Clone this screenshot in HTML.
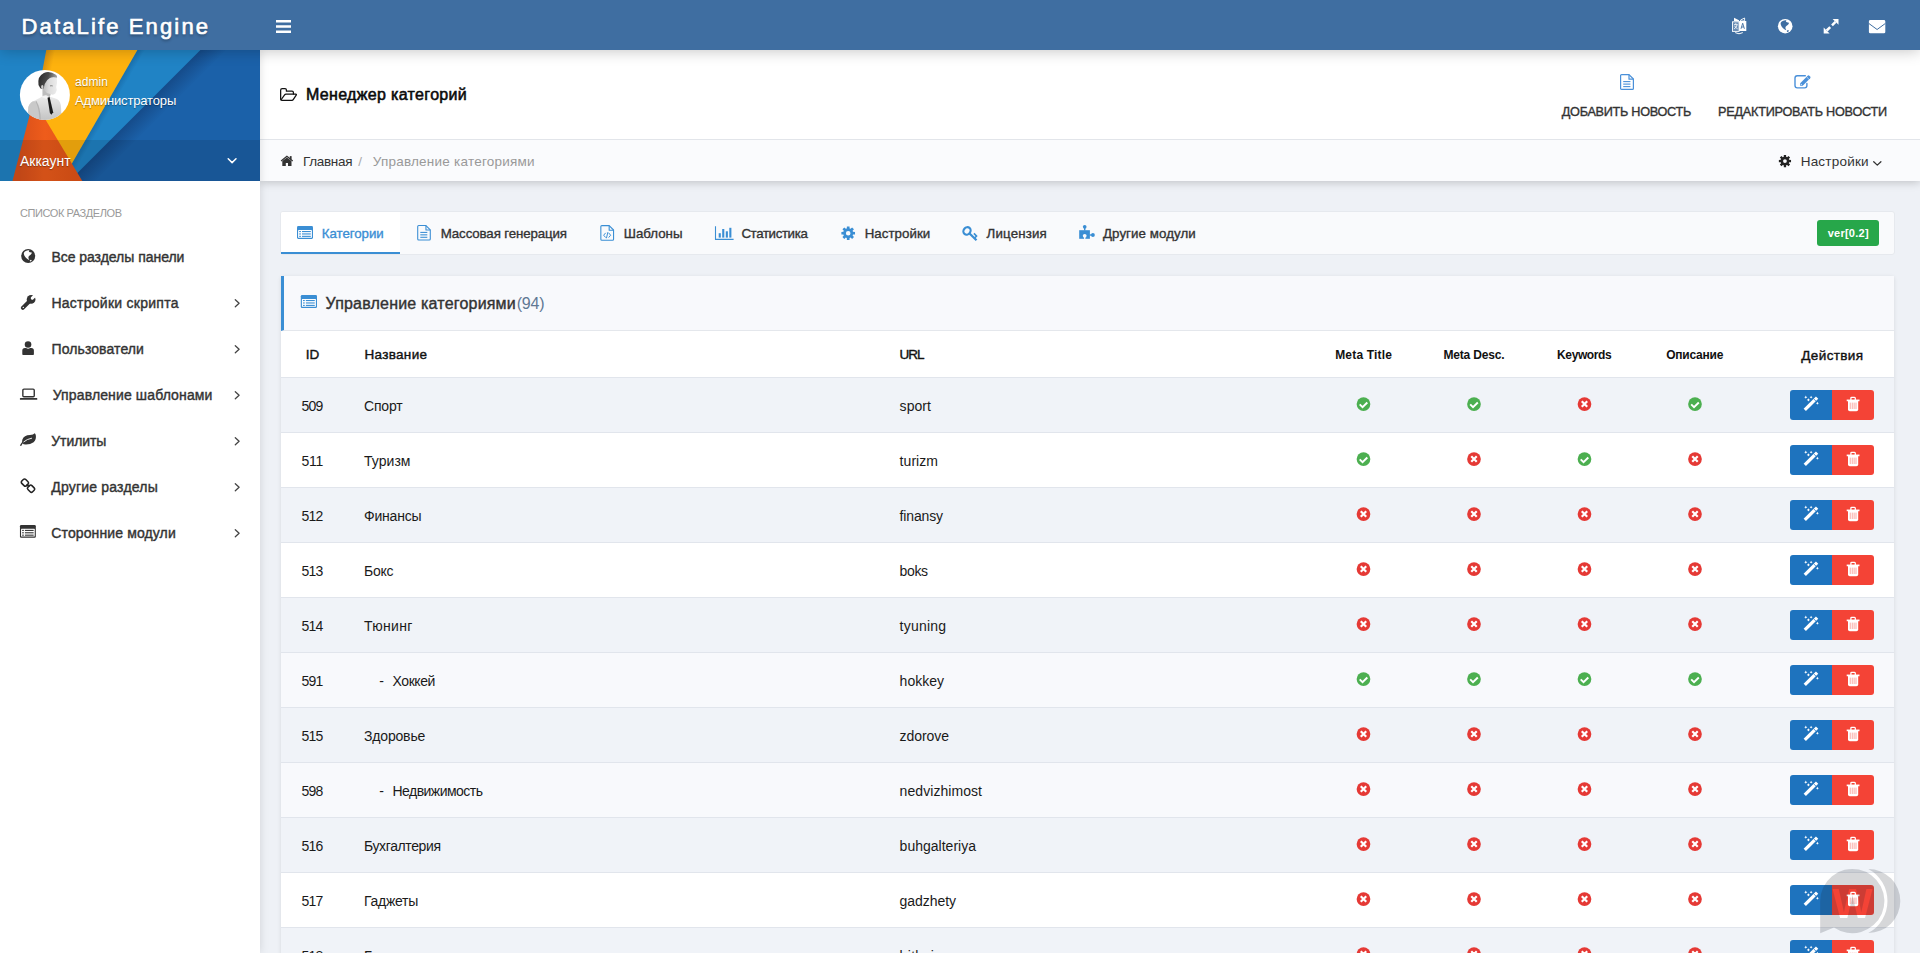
<!DOCTYPE html>
<html lang="ru"><head><meta charset="utf-8"><title>DataLife Engine</title>
<style>
html,body{margin:0;padding:0}
body{width:1920px;height:953px;overflow:hidden;background:#eef1f6;position:relative;font-family:"Liberation Sans",sans-serif;}
.t{position:absolute;white-space:nowrap;line-height:1;display:block}
.i{position:absolute;display:block;overflow:visible}
.b{position:absolute;box-sizing:border-box}
</style></head><body>
<div class="b" style="left:280px;top:211px;width:1615px;height:44px;background:#f9fafc;border:1px solid #e6e9ee;border-radius:3px;"></div>
<div class="b" style="left:281px;top:212px;width:119px;height:40px;background:#fff;border-radius:2px 0 0 0;"></div>
<div class="b" style="left:281px;top:252px;width:119px;height:2px;background:#3a8ed4;"></div>
<span class="t" style="left:321.75px;top:227.04px;font-size:13.3px;color:#3a8ed4;letter-spacing:-0.050px;-webkit-text-stroke:0.35px #3a8ed4;">Категории</span>
<span class="t" style="left:440.75px;top:227.04px;font-size:13.3px;color:#333;letter-spacing:-0.128px;-webkit-text-stroke:0.35px #333;">Массовая генерация</span>
<span class="t" style="left:623.75px;top:227.04px;font-size:13.3px;color:#333;letter-spacing:-0.011px;-webkit-text-stroke:0.35px #333;">Шаблоны</span>
<span class="t" style="left:741.40px;top:227.04px;font-size:13.3px;color:#333;letter-spacing:-0.383px;-webkit-text-stroke:0.35px #333;">Статистика</span>
<span class="t" style="left:864.70px;top:227.04px;font-size:13.3px;color:#333;letter-spacing:0.036px;-webkit-text-stroke:0.35px #333;">Настройки</span>
<span class="t" style="left:986.60px;top:227.04px;font-size:13.3px;color:#333;letter-spacing:0.143px;-webkit-text-stroke:0.35px #333;">Лицензия</span>
<span class="t" style="left:1103.00px;top:227.04px;font-size:13.3px;color:#333;letter-spacing:0.072px;-webkit-text-stroke:0.35px #333;">Другие модули</span>
<div class="b" style="left:1817px;top:220px;width:62px;height:26px;background:#27a74a;border-radius:3px;"></div>
<span class="t" style="left:1827.70px;top:227.69px;font-size:11px;color:#fff;letter-spacing:0.252px;font-weight:700;">ver[0.2]</span>
<div class="b" style="left:281px;top:276px;width:1613px;height:700px;background:#fff;box-shadow:0 1px 4px rgba(0,0,0,.10);"></div>
<div class="b" style="left:281px;top:276px;width:1613px;height:55px;background:#f8f9fc;border-left:3px solid #3a8ed4;border-bottom:1px solid #e4e7ec;"></div>
<span class="t" style="left:325.50px;top:295.76px;font-size:16px;color:#333;letter-spacing:0.195px;-webkit-text-stroke:0.4px #333;">Управление категориями</span>
<span class="t" style="left:516.75px;top:295.76px;font-size:16px;color:#5f7894;letter-spacing:-0.234px;">(94)</span>
<div class="b" style="left:281px;top:377px;width:1613px;height:1px;background:#e1e5ec;"></div>
<span class="t" style="left:305.80px;top:348.27px;font-size:13.5px;color:#111;letter-spacing:-0.100px;-webkit-text-stroke:0.4px #111;">ID</span>
<span class="t" style="left:364.50px;top:348.27px;font-size:13.5px;color:#111;letter-spacing:0.310px;-webkit-text-stroke:0.4px #111;">Название</span>
<span class="t" style="left:899.60px;top:348.27px;font-size:13.5px;color:#111;letter-spacing:-1.003px;-webkit-text-stroke:0.4px #111;">URL</span>
<span class="t" style="left:1335.20px;top:348.64px;font-size:12px;color:#111;letter-spacing:0.186px;font-weight:700;">Meta Title</span>
<span class="t" style="left:1443.40px;top:348.64px;font-size:12px;color:#111;letter-spacing:-0.166px;font-weight:700;">Meta Desc.</span>
<span class="t" style="left:1557.10px;top:348.64px;font-size:12px;color:#111;letter-spacing:-0.393px;font-weight:700;">Keywords</span>
<span class="t" style="left:1666.20px;top:348.64px;font-size:12px;color:#111;letter-spacing:-0.222px;font-weight:700;">Описание</span>
<span class="t" style="left:1801.30px;top:348.57px;font-size:13.5px;color:#111;letter-spacing:0.379px;-webkit-text-stroke:0.4px #111;">Действия</span>
<div class="b" style="left:281px;top:378px;width:1613px;height:55px;background:#f0f3f8;border-bottom:1px solid #e1e5ec;"></div>
<span class="t" style="left:301.60px;top:399.35px;font-size:14px;color:#1a1a1a;letter-spacing:-0.779px;">509</span>
<span class="t" style="left:364.00px;top:399.35px;font-size:14px;color:#1a1a1a;letter-spacing:-0.192px;">Спорт</span>
<span class="t" style="left:899.60px;top:399.35px;font-size:14px;color:#1a1a1a;letter-spacing:0.069px;">sport</span>
<svg class="i" style="left:1356px;top:397px;" width="15" height="14" viewBox="-0.6642 -0.2044 15.328 14.307"><circle cx="7" cy="7" r="7" fill="#4caf50"/><path d="M3.1 7.3 L6 10.1 L10.9 5.4" fill="none" stroke="#fff" stroke-width="2" stroke-linecap="butt" stroke-linejoin="miter"/></svg>
<svg class="i" style="left:1467px;top:397px;" width="14" height="14" viewBox="-0.1533 -0.2044 14.307 14.307"><circle cx="7" cy="7" r="7" fill="#4caf50"/><path d="M3.1 7.3 L6 10.1 L10.9 5.4" fill="none" stroke="#fff" stroke-width="2" stroke-linecap="butt" stroke-linejoin="miter"/></svg>
<svg class="i" style="left:1577px;top:397px;" width="15" height="14" viewBox="-0.6642 -0.2044 15.328 14.307"><circle cx="7" cy="7" r="7" fill="#e53935"/><path d="M4.2 4.2 L9.8 9.8 M9.8 4.2 L4.2 9.8" fill="none" stroke="#fff" stroke-width="2.2" stroke-linecap="butt"/></svg>
<svg class="i" style="left:1688px;top:397px;" width="14" height="14" viewBox="-0.1533 -0.2044 14.307 14.307"><circle cx="7" cy="7" r="7" fill="#4caf50"/><path d="M3.1 7.3 L6 10.1 L10.9 5.4" fill="none" stroke="#fff" stroke-width="2" stroke-linecap="butt" stroke-linejoin="miter"/></svg>
<div class="b" style="left:1790px;top:390px;width:42px;height:30px;background:#1e73be;border-radius:3px 0 0 3px;"></div>
<div class="b" style="left:1832px;top:390px;width:42px;height:30px;background:#f44336;border-radius:0 3px 3px 0;"></div>
<svg class="i" style="left:1803px;top:396px;" width="16" height="16" viewBox="-0.5 0 16 16"><path d="M1.3 13.9 L13.6 1.6" stroke="#fff" stroke-width="3.3"/><path d="M10.1 2.8 L12.5 5.2" stroke="#1e73be" stroke-width="0.8"/><g fill="#fff"><path d="M2.3 -0.4l.55 1.05 1.05.55-1.05.55-.55 1.05-.55-1.05-1.05-.55 1.05-.55z"/><path d="M7.6 -0.3l.5 .95 .95.5-.95.5-.5.95-.5-.95-.95-.5.95-.5z"/><path d="M4.9 2.3l.55 1.05 1.05.55-1.05.55-.55 1.05-.55-1.05-1.05-.55 1.05-.55z"/><path d="M13.9 5.8l.5.95.95.5-.95.5-.5.95-.5-.95-.95-.5.95-.5z"/></g></svg>
<svg class="i" style="left:1846px;top:396px;" width="14" height="16" viewBox="-0.5 -0.7 14 16"><g fill="none" stroke="#fff"><path d="M4.4 3.2 V1.5 Q4.4 0.65 5.2 0.65 H8 Q8.8 0.65 8.8 1.5 V3.2" stroke-width="1.3"/><path d="M0.2 3.7 H13" stroke-width="1.7"/></g><path d="M1.5 4 H11.7 V12.7 Q11.7 14.5 9.9 14.5 H3.3 Q1.5 14.5 1.5 12.7Z" fill="#fff"/><g fill="#f44336" fill-opacity=".55"><rect x="3.3" y="5.9" width="0.8" height="6.4"/><rect x="5.3" y="5.9" width="0.8" height="6.4"/><rect x="7.2" y="5.9" width="0.8" height="6.4"/><rect x="9.1" y="5.9" width="0.8" height="6.4"/></g></svg>
<div class="b" style="left:281px;top:433px;width:1613px;height:55px;background:#ffffff;border-bottom:1px solid #e1e5ec;"></div>
<span class="t" style="left:301.60px;top:454.35px;font-size:14px;color:#1a1a1a;letter-spacing:-0.260px;">511</span>
<span class="t" style="left:364.00px;top:454.35px;font-size:14px;color:#1a1a1a;letter-spacing:0.048px;">Туризм</span>
<span class="t" style="left:899.60px;top:454.35px;font-size:14px;color:#1a1a1a;letter-spacing:0.058px;">turizm</span>
<svg class="i" style="left:1356px;top:452px;" width="15" height="14" viewBox="-0.6642 -0.2044 15.328 14.307"><circle cx="7" cy="7" r="7" fill="#4caf50"/><path d="M3.1 7.3 L6 10.1 L10.9 5.4" fill="none" stroke="#fff" stroke-width="2" stroke-linecap="butt" stroke-linejoin="miter"/></svg>
<svg class="i" style="left:1467px;top:452px;" width="14" height="14" viewBox="-0.1533 -0.2044 14.307 14.307"><circle cx="7" cy="7" r="7" fill="#e53935"/><path d="M4.2 4.2 L9.8 9.8 M9.8 4.2 L4.2 9.8" fill="none" stroke="#fff" stroke-width="2.2" stroke-linecap="butt"/></svg>
<svg class="i" style="left:1577px;top:452px;" width="15" height="14" viewBox="-0.6642 -0.2044 15.328 14.307"><circle cx="7" cy="7" r="7" fill="#4caf50"/><path d="M3.1 7.3 L6 10.1 L10.9 5.4" fill="none" stroke="#fff" stroke-width="2" stroke-linecap="butt" stroke-linejoin="miter"/></svg>
<svg class="i" style="left:1688px;top:452px;" width="14" height="14" viewBox="-0.1533 -0.2044 14.307 14.307"><circle cx="7" cy="7" r="7" fill="#e53935"/><path d="M4.2 4.2 L9.8 9.8 M9.8 4.2 L4.2 9.8" fill="none" stroke="#fff" stroke-width="2.2" stroke-linecap="butt"/></svg>
<div class="b" style="left:1790px;top:445px;width:42px;height:30px;background:#1e73be;border-radius:3px 0 0 3px;"></div>
<div class="b" style="left:1832px;top:445px;width:42px;height:30px;background:#f44336;border-radius:0 3px 3px 0;"></div>
<svg class="i" style="left:1803px;top:451px;" width="16" height="16" viewBox="-0.5 0 16 16"><path d="M1.3 13.9 L13.6 1.6" stroke="#fff" stroke-width="3.3"/><path d="M10.1 2.8 L12.5 5.2" stroke="#1e73be" stroke-width="0.8"/><g fill="#fff"><path d="M2.3 -0.4l.55 1.05 1.05.55-1.05.55-.55 1.05-.55-1.05-1.05-.55 1.05-.55z"/><path d="M7.6 -0.3l.5 .95 .95.5-.95.5-.5.95-.5-.95-.95-.5.95-.5z"/><path d="M4.9 2.3l.55 1.05 1.05.55-1.05.55-.55 1.05-.55-1.05-1.05-.55 1.05-.55z"/><path d="M13.9 5.8l.5.95.95.5-.95.5-.5.95-.5-.95-.95-.5.95-.5z"/></g></svg>
<svg class="i" style="left:1846px;top:451px;" width="14" height="16" viewBox="-0.5 -0.7 14 16"><g fill="none" stroke="#fff"><path d="M4.4 3.2 V1.5 Q4.4 0.65 5.2 0.65 H8 Q8.8 0.65 8.8 1.5 V3.2" stroke-width="1.3"/><path d="M0.2 3.7 H13" stroke-width="1.7"/></g><path d="M1.5 4 H11.7 V12.7 Q11.7 14.5 9.9 14.5 H3.3 Q1.5 14.5 1.5 12.7Z" fill="#fff"/><g fill="#f44336" fill-opacity=".55"><rect x="3.3" y="5.9" width="0.8" height="6.4"/><rect x="5.3" y="5.9" width="0.8" height="6.4"/><rect x="7.2" y="5.9" width="0.8" height="6.4"/><rect x="9.1" y="5.9" width="0.8" height="6.4"/></g></svg>
<div class="b" style="left:281px;top:488px;width:1613px;height:55px;background:#f0f3f8;border-bottom:1px solid #e1e5ec;"></div>
<span class="t" style="left:301.60px;top:509.35px;font-size:14px;color:#1a1a1a;letter-spacing:-0.779px;">512</span>
<span class="t" style="left:364.00px;top:509.35px;font-size:14px;color:#1a1a1a;letter-spacing:-0.196px;">Финансы</span>
<span class="t" style="left:899.60px;top:509.35px;font-size:14px;color:#1a1a1a;letter-spacing:-0.160px;">finansy</span>
<svg class="i" style="left:1356px;top:507px;" width="15" height="14" viewBox="-0.6642 -0.2044 15.328 14.307"><circle cx="7" cy="7" r="7" fill="#e53935"/><path d="M4.2 4.2 L9.8 9.8 M9.8 4.2 L4.2 9.8" fill="none" stroke="#fff" stroke-width="2.2" stroke-linecap="butt"/></svg>
<svg class="i" style="left:1467px;top:507px;" width="14" height="14" viewBox="-0.1533 -0.2044 14.307 14.307"><circle cx="7" cy="7" r="7" fill="#e53935"/><path d="M4.2 4.2 L9.8 9.8 M9.8 4.2 L4.2 9.8" fill="none" stroke="#fff" stroke-width="2.2" stroke-linecap="butt"/></svg>
<svg class="i" style="left:1577px;top:507px;" width="15" height="14" viewBox="-0.6642 -0.2044 15.328 14.307"><circle cx="7" cy="7" r="7" fill="#e53935"/><path d="M4.2 4.2 L9.8 9.8 M9.8 4.2 L4.2 9.8" fill="none" stroke="#fff" stroke-width="2.2" stroke-linecap="butt"/></svg>
<svg class="i" style="left:1688px;top:507px;" width="14" height="14" viewBox="-0.1533 -0.2044 14.307 14.307"><circle cx="7" cy="7" r="7" fill="#e53935"/><path d="M4.2 4.2 L9.8 9.8 M9.8 4.2 L4.2 9.8" fill="none" stroke="#fff" stroke-width="2.2" stroke-linecap="butt"/></svg>
<div class="b" style="left:1790px;top:500px;width:42px;height:30px;background:#1e73be;border-radius:3px 0 0 3px;"></div>
<div class="b" style="left:1832px;top:500px;width:42px;height:30px;background:#f44336;border-radius:0 3px 3px 0;"></div>
<svg class="i" style="left:1803px;top:506px;" width="16" height="16" viewBox="-0.5 0 16 16"><path d="M1.3 13.9 L13.6 1.6" stroke="#fff" stroke-width="3.3"/><path d="M10.1 2.8 L12.5 5.2" stroke="#1e73be" stroke-width="0.8"/><g fill="#fff"><path d="M2.3 -0.4l.55 1.05 1.05.55-1.05.55-.55 1.05-.55-1.05-1.05-.55 1.05-.55z"/><path d="M7.6 -0.3l.5 .95 .95.5-.95.5-.5.95-.5-.95-.95-.5.95-.5z"/><path d="M4.9 2.3l.55 1.05 1.05.55-1.05.55-.55 1.05-.55-1.05-1.05-.55 1.05-.55z"/><path d="M13.9 5.8l.5.95.95.5-.95.5-.5.95-.5-.95-.95-.5.95-.5z"/></g></svg>
<svg class="i" style="left:1846px;top:506px;" width="14" height="16" viewBox="-0.5 -0.7 14 16"><g fill="none" stroke="#fff"><path d="M4.4 3.2 V1.5 Q4.4 0.65 5.2 0.65 H8 Q8.8 0.65 8.8 1.5 V3.2" stroke-width="1.3"/><path d="M0.2 3.7 H13" stroke-width="1.7"/></g><path d="M1.5 4 H11.7 V12.7 Q11.7 14.5 9.9 14.5 H3.3 Q1.5 14.5 1.5 12.7Z" fill="#fff"/><g fill="#f44336" fill-opacity=".55"><rect x="3.3" y="5.9" width="0.8" height="6.4"/><rect x="5.3" y="5.9" width="0.8" height="6.4"/><rect x="7.2" y="5.9" width="0.8" height="6.4"/><rect x="9.1" y="5.9" width="0.8" height="6.4"/></g></svg>
<div class="b" style="left:281px;top:543px;width:1613px;height:55px;background:#ffffff;border-bottom:1px solid #e1e5ec;"></div>
<span class="t" style="left:301.60px;top:564.35px;font-size:14px;color:#1a1a1a;letter-spacing:-0.779px;">513</span>
<span class="t" style="left:364.00px;top:564.35px;font-size:14px;color:#1a1a1a;letter-spacing:-0.285px;">Бокс</span>
<span class="t" style="left:899.60px;top:564.35px;font-size:14px;color:#1a1a1a;letter-spacing:-0.391px;">boks</span>
<svg class="i" style="left:1356px;top:562px;" width="15" height="14" viewBox="-0.6642 -0.2044 15.328 14.307"><circle cx="7" cy="7" r="7" fill="#e53935"/><path d="M4.2 4.2 L9.8 9.8 M9.8 4.2 L4.2 9.8" fill="none" stroke="#fff" stroke-width="2.2" stroke-linecap="butt"/></svg>
<svg class="i" style="left:1467px;top:562px;" width="14" height="14" viewBox="-0.1533 -0.2044 14.307 14.307"><circle cx="7" cy="7" r="7" fill="#e53935"/><path d="M4.2 4.2 L9.8 9.8 M9.8 4.2 L4.2 9.8" fill="none" stroke="#fff" stroke-width="2.2" stroke-linecap="butt"/></svg>
<svg class="i" style="left:1577px;top:562px;" width="15" height="14" viewBox="-0.6642 -0.2044 15.328 14.307"><circle cx="7" cy="7" r="7" fill="#e53935"/><path d="M4.2 4.2 L9.8 9.8 M9.8 4.2 L4.2 9.8" fill="none" stroke="#fff" stroke-width="2.2" stroke-linecap="butt"/></svg>
<svg class="i" style="left:1688px;top:562px;" width="14" height="14" viewBox="-0.1533 -0.2044 14.307 14.307"><circle cx="7" cy="7" r="7" fill="#e53935"/><path d="M4.2 4.2 L9.8 9.8 M9.8 4.2 L4.2 9.8" fill="none" stroke="#fff" stroke-width="2.2" stroke-linecap="butt"/></svg>
<div class="b" style="left:1790px;top:555px;width:42px;height:30px;background:#1e73be;border-radius:3px 0 0 3px;"></div>
<div class="b" style="left:1832px;top:555px;width:42px;height:30px;background:#f44336;border-radius:0 3px 3px 0;"></div>
<svg class="i" style="left:1803px;top:561px;" width="16" height="16" viewBox="-0.5 0 16 16"><path d="M1.3 13.9 L13.6 1.6" stroke="#fff" stroke-width="3.3"/><path d="M10.1 2.8 L12.5 5.2" stroke="#1e73be" stroke-width="0.8"/><g fill="#fff"><path d="M2.3 -0.4l.55 1.05 1.05.55-1.05.55-.55 1.05-.55-1.05-1.05-.55 1.05-.55z"/><path d="M7.6 -0.3l.5 .95 .95.5-.95.5-.5.95-.5-.95-.95-.5.95-.5z"/><path d="M4.9 2.3l.55 1.05 1.05.55-1.05.55-.55 1.05-.55-1.05-1.05-.55 1.05-.55z"/><path d="M13.9 5.8l.5.95.95.5-.95.5-.5.95-.5-.95-.95-.5.95-.5z"/></g></svg>
<svg class="i" style="left:1846px;top:561px;" width="14" height="16" viewBox="-0.5 -0.7 14 16"><g fill="none" stroke="#fff"><path d="M4.4 3.2 V1.5 Q4.4 0.65 5.2 0.65 H8 Q8.8 0.65 8.8 1.5 V3.2" stroke-width="1.3"/><path d="M0.2 3.7 H13" stroke-width="1.7"/></g><path d="M1.5 4 H11.7 V12.7 Q11.7 14.5 9.9 14.5 H3.3 Q1.5 14.5 1.5 12.7Z" fill="#fff"/><g fill="#f44336" fill-opacity=".55"><rect x="3.3" y="5.9" width="0.8" height="6.4"/><rect x="5.3" y="5.9" width="0.8" height="6.4"/><rect x="7.2" y="5.9" width="0.8" height="6.4"/><rect x="9.1" y="5.9" width="0.8" height="6.4"/></g></svg>
<div class="b" style="left:281px;top:598px;width:1613px;height:55px;background:#f0f3f8;border-bottom:1px solid #e1e5ec;"></div>
<span class="t" style="left:301.60px;top:619.35px;font-size:14px;color:#1a1a1a;letter-spacing:-0.779px;">514</span>
<span class="t" style="left:364.00px;top:619.35px;font-size:14px;color:#1a1a1a;letter-spacing:0.295px;">Тюнинг</span>
<span class="t" style="left:899.60px;top:619.35px;font-size:14px;color:#1a1a1a;letter-spacing:0.209px;">tyuning</span>
<svg class="i" style="left:1356px;top:617px;" width="15" height="14" viewBox="-0.6642 -0.2044 15.328 14.307"><circle cx="7" cy="7" r="7" fill="#e53935"/><path d="M4.2 4.2 L9.8 9.8 M9.8 4.2 L4.2 9.8" fill="none" stroke="#fff" stroke-width="2.2" stroke-linecap="butt"/></svg>
<svg class="i" style="left:1467px;top:617px;" width="14" height="14" viewBox="-0.1533 -0.2044 14.307 14.307"><circle cx="7" cy="7" r="7" fill="#e53935"/><path d="M4.2 4.2 L9.8 9.8 M9.8 4.2 L4.2 9.8" fill="none" stroke="#fff" stroke-width="2.2" stroke-linecap="butt"/></svg>
<svg class="i" style="left:1577px;top:617px;" width="15" height="14" viewBox="-0.6642 -0.2044 15.328 14.307"><circle cx="7" cy="7" r="7" fill="#e53935"/><path d="M4.2 4.2 L9.8 9.8 M9.8 4.2 L4.2 9.8" fill="none" stroke="#fff" stroke-width="2.2" stroke-linecap="butt"/></svg>
<svg class="i" style="left:1688px;top:617px;" width="14" height="14" viewBox="-0.1533 -0.2044 14.307 14.307"><circle cx="7" cy="7" r="7" fill="#e53935"/><path d="M4.2 4.2 L9.8 9.8 M9.8 4.2 L4.2 9.8" fill="none" stroke="#fff" stroke-width="2.2" stroke-linecap="butt"/></svg>
<div class="b" style="left:1790px;top:610px;width:42px;height:30px;background:#1e73be;border-radius:3px 0 0 3px;"></div>
<div class="b" style="left:1832px;top:610px;width:42px;height:30px;background:#f44336;border-radius:0 3px 3px 0;"></div>
<svg class="i" style="left:1803px;top:616px;" width="16" height="16" viewBox="-0.5 0 16 16"><path d="M1.3 13.9 L13.6 1.6" stroke="#fff" stroke-width="3.3"/><path d="M10.1 2.8 L12.5 5.2" stroke="#1e73be" stroke-width="0.8"/><g fill="#fff"><path d="M2.3 -0.4l.55 1.05 1.05.55-1.05.55-.55 1.05-.55-1.05-1.05-.55 1.05-.55z"/><path d="M7.6 -0.3l.5 .95 .95.5-.95.5-.5.95-.5-.95-.95-.5.95-.5z"/><path d="M4.9 2.3l.55 1.05 1.05.55-1.05.55-.55 1.05-.55-1.05-1.05-.55 1.05-.55z"/><path d="M13.9 5.8l.5.95.95.5-.95.5-.5.95-.5-.95-.95-.5.95-.5z"/></g></svg>
<svg class="i" style="left:1846px;top:616px;" width="14" height="16" viewBox="-0.5 -0.7 14 16"><g fill="none" stroke="#fff"><path d="M4.4 3.2 V1.5 Q4.4 0.65 5.2 0.65 H8 Q8.8 0.65 8.8 1.5 V3.2" stroke-width="1.3"/><path d="M0.2 3.7 H13" stroke-width="1.7"/></g><path d="M1.5 4 H11.7 V12.7 Q11.7 14.5 9.9 14.5 H3.3 Q1.5 14.5 1.5 12.7Z" fill="#fff"/><g fill="#f44336" fill-opacity=".55"><rect x="3.3" y="5.9" width="0.8" height="6.4"/><rect x="5.3" y="5.9" width="0.8" height="6.4"/><rect x="7.2" y="5.9" width="0.8" height="6.4"/><rect x="9.1" y="5.9" width="0.8" height="6.4"/></g></svg>
<div class="b" style="left:281px;top:653px;width:1613px;height:55px;background:#f8f9fc;border-bottom:1px solid #e1e5ec;"></div>
<span class="t" style="left:301.60px;top:674.35px;font-size:14px;color:#1a1a1a;letter-spacing:-0.779px;">591</span>
<span class="t" style="left:379.30px;top:674.35px;font-size:14px;color:#1a1a1a;letter-spacing:0.000px;">-</span>
<span class="t" style="left:392.50px;top:674.35px;font-size:14px;color:#1a1a1a;letter-spacing:-0.416px;">Хоккей</span>
<span class="t" style="left:899.60px;top:674.35px;font-size:14px;color:#1a1a1a;letter-spacing:0.008px;">hokkey</span>
<svg class="i" style="left:1356px;top:672px;" width="15" height="14" viewBox="-0.6642 -0.2044 15.328 14.307"><circle cx="7" cy="7" r="7" fill="#4caf50"/><path d="M3.1 7.3 L6 10.1 L10.9 5.4" fill="none" stroke="#fff" stroke-width="2" stroke-linecap="butt" stroke-linejoin="miter"/></svg>
<svg class="i" style="left:1467px;top:672px;" width="14" height="14" viewBox="-0.1533 -0.2044 14.307 14.307"><circle cx="7" cy="7" r="7" fill="#4caf50"/><path d="M3.1 7.3 L6 10.1 L10.9 5.4" fill="none" stroke="#fff" stroke-width="2" stroke-linecap="butt" stroke-linejoin="miter"/></svg>
<svg class="i" style="left:1577px;top:672px;" width="15" height="14" viewBox="-0.6642 -0.2044 15.328 14.307"><circle cx="7" cy="7" r="7" fill="#4caf50"/><path d="M3.1 7.3 L6 10.1 L10.9 5.4" fill="none" stroke="#fff" stroke-width="2" stroke-linecap="butt" stroke-linejoin="miter"/></svg>
<svg class="i" style="left:1688px;top:672px;" width="14" height="14" viewBox="-0.1533 -0.2044 14.307 14.307"><circle cx="7" cy="7" r="7" fill="#4caf50"/><path d="M3.1 7.3 L6 10.1 L10.9 5.4" fill="none" stroke="#fff" stroke-width="2" stroke-linecap="butt" stroke-linejoin="miter"/></svg>
<div class="b" style="left:1790px;top:665px;width:42px;height:30px;background:#1e73be;border-radius:3px 0 0 3px;"></div>
<div class="b" style="left:1832px;top:665px;width:42px;height:30px;background:#f44336;border-radius:0 3px 3px 0;"></div>
<svg class="i" style="left:1803px;top:671px;" width="16" height="16" viewBox="-0.5 0 16 16"><path d="M1.3 13.9 L13.6 1.6" stroke="#fff" stroke-width="3.3"/><path d="M10.1 2.8 L12.5 5.2" stroke="#1e73be" stroke-width="0.8"/><g fill="#fff"><path d="M2.3 -0.4l.55 1.05 1.05.55-1.05.55-.55 1.05-.55-1.05-1.05-.55 1.05-.55z"/><path d="M7.6 -0.3l.5 .95 .95.5-.95.5-.5.95-.5-.95-.95-.5.95-.5z"/><path d="M4.9 2.3l.55 1.05 1.05.55-1.05.55-.55 1.05-.55-1.05-1.05-.55 1.05-.55z"/><path d="M13.9 5.8l.5.95.95.5-.95.5-.5.95-.5-.95-.95-.5.95-.5z"/></g></svg>
<svg class="i" style="left:1846px;top:671px;" width="14" height="16" viewBox="-0.5 -0.7 14 16"><g fill="none" stroke="#fff"><path d="M4.4 3.2 V1.5 Q4.4 0.65 5.2 0.65 H8 Q8.8 0.65 8.8 1.5 V3.2" stroke-width="1.3"/><path d="M0.2 3.7 H13" stroke-width="1.7"/></g><path d="M1.5 4 H11.7 V12.7 Q11.7 14.5 9.9 14.5 H3.3 Q1.5 14.5 1.5 12.7Z" fill="#fff"/><g fill="#f44336" fill-opacity=".55"><rect x="3.3" y="5.9" width="0.8" height="6.4"/><rect x="5.3" y="5.9" width="0.8" height="6.4"/><rect x="7.2" y="5.9" width="0.8" height="6.4"/><rect x="9.1" y="5.9" width="0.8" height="6.4"/></g></svg>
<div class="b" style="left:281px;top:708px;width:1613px;height:55px;background:#f0f3f8;border-bottom:1px solid #e1e5ec;"></div>
<span class="t" style="left:301.60px;top:729.35px;font-size:14px;color:#1a1a1a;letter-spacing:-0.779px;">515</span>
<span class="t" style="left:364.00px;top:729.35px;font-size:14px;color:#1a1a1a;letter-spacing:-0.172px;">Здоровье</span>
<span class="t" style="left:899.60px;top:729.35px;font-size:14px;color:#1a1a1a;letter-spacing:-0.068px;">zdorove</span>
<svg class="i" style="left:1356px;top:727px;" width="15" height="14" viewBox="-0.6642 -0.2044 15.328 14.307"><circle cx="7" cy="7" r="7" fill="#e53935"/><path d="M4.2 4.2 L9.8 9.8 M9.8 4.2 L4.2 9.8" fill="none" stroke="#fff" stroke-width="2.2" stroke-linecap="butt"/></svg>
<svg class="i" style="left:1467px;top:727px;" width="14" height="14" viewBox="-0.1533 -0.2044 14.307 14.307"><circle cx="7" cy="7" r="7" fill="#e53935"/><path d="M4.2 4.2 L9.8 9.8 M9.8 4.2 L4.2 9.8" fill="none" stroke="#fff" stroke-width="2.2" stroke-linecap="butt"/></svg>
<svg class="i" style="left:1577px;top:727px;" width="15" height="14" viewBox="-0.6642 -0.2044 15.328 14.307"><circle cx="7" cy="7" r="7" fill="#e53935"/><path d="M4.2 4.2 L9.8 9.8 M9.8 4.2 L4.2 9.8" fill="none" stroke="#fff" stroke-width="2.2" stroke-linecap="butt"/></svg>
<svg class="i" style="left:1688px;top:727px;" width="14" height="14" viewBox="-0.1533 -0.2044 14.307 14.307"><circle cx="7" cy="7" r="7" fill="#e53935"/><path d="M4.2 4.2 L9.8 9.8 M9.8 4.2 L4.2 9.8" fill="none" stroke="#fff" stroke-width="2.2" stroke-linecap="butt"/></svg>
<div class="b" style="left:1790px;top:720px;width:42px;height:30px;background:#1e73be;border-radius:3px 0 0 3px;"></div>
<div class="b" style="left:1832px;top:720px;width:42px;height:30px;background:#f44336;border-radius:0 3px 3px 0;"></div>
<svg class="i" style="left:1803px;top:726px;" width="16" height="16" viewBox="-0.5 0 16 16"><path d="M1.3 13.9 L13.6 1.6" stroke="#fff" stroke-width="3.3"/><path d="M10.1 2.8 L12.5 5.2" stroke="#1e73be" stroke-width="0.8"/><g fill="#fff"><path d="M2.3 -0.4l.55 1.05 1.05.55-1.05.55-.55 1.05-.55-1.05-1.05-.55 1.05-.55z"/><path d="M7.6 -0.3l.5 .95 .95.5-.95.5-.5.95-.5-.95-.95-.5.95-.5z"/><path d="M4.9 2.3l.55 1.05 1.05.55-1.05.55-.55 1.05-.55-1.05-1.05-.55 1.05-.55z"/><path d="M13.9 5.8l.5.95.95.5-.95.5-.5.95-.5-.95-.95-.5.95-.5z"/></g></svg>
<svg class="i" style="left:1846px;top:726px;" width="14" height="16" viewBox="-0.5 -0.7 14 16"><g fill="none" stroke="#fff"><path d="M4.4 3.2 V1.5 Q4.4 0.65 5.2 0.65 H8 Q8.8 0.65 8.8 1.5 V3.2" stroke-width="1.3"/><path d="M0.2 3.7 H13" stroke-width="1.7"/></g><path d="M1.5 4 H11.7 V12.7 Q11.7 14.5 9.9 14.5 H3.3 Q1.5 14.5 1.5 12.7Z" fill="#fff"/><g fill="#f44336" fill-opacity=".55"><rect x="3.3" y="5.9" width="0.8" height="6.4"/><rect x="5.3" y="5.9" width="0.8" height="6.4"/><rect x="7.2" y="5.9" width="0.8" height="6.4"/><rect x="9.1" y="5.9" width="0.8" height="6.4"/></g></svg>
<div class="b" style="left:281px;top:763px;width:1613px;height:55px;background:#f8f9fc;border-bottom:1px solid #e1e5ec;"></div>
<span class="t" style="left:301.60px;top:784.35px;font-size:14px;color:#1a1a1a;letter-spacing:-0.779px;">598</span>
<span class="t" style="left:379.30px;top:784.35px;font-size:14px;color:#1a1a1a;letter-spacing:0.000px;">-</span>
<span class="t" style="left:392.50px;top:784.35px;font-size:14px;color:#1a1a1a;letter-spacing:-0.529px;">Недвижимость</span>
<span class="t" style="left:899.60px;top:784.35px;font-size:14px;color:#1a1a1a;letter-spacing:0.063px;">nedvizhimost</span>
<svg class="i" style="left:1356px;top:782px;" width="15" height="14" viewBox="-0.6642 -0.2044 15.328 14.307"><circle cx="7" cy="7" r="7" fill="#e53935"/><path d="M4.2 4.2 L9.8 9.8 M9.8 4.2 L4.2 9.8" fill="none" stroke="#fff" stroke-width="2.2" stroke-linecap="butt"/></svg>
<svg class="i" style="left:1467px;top:782px;" width="14" height="14" viewBox="-0.1533 -0.2044 14.307 14.307"><circle cx="7" cy="7" r="7" fill="#e53935"/><path d="M4.2 4.2 L9.8 9.8 M9.8 4.2 L4.2 9.8" fill="none" stroke="#fff" stroke-width="2.2" stroke-linecap="butt"/></svg>
<svg class="i" style="left:1577px;top:782px;" width="15" height="14" viewBox="-0.6642 -0.2044 15.328 14.307"><circle cx="7" cy="7" r="7" fill="#e53935"/><path d="M4.2 4.2 L9.8 9.8 M9.8 4.2 L4.2 9.8" fill="none" stroke="#fff" stroke-width="2.2" stroke-linecap="butt"/></svg>
<svg class="i" style="left:1688px;top:782px;" width="14" height="14" viewBox="-0.1533 -0.2044 14.307 14.307"><circle cx="7" cy="7" r="7" fill="#e53935"/><path d="M4.2 4.2 L9.8 9.8 M9.8 4.2 L4.2 9.8" fill="none" stroke="#fff" stroke-width="2.2" stroke-linecap="butt"/></svg>
<div class="b" style="left:1790px;top:775px;width:42px;height:30px;background:#1e73be;border-radius:3px 0 0 3px;"></div>
<div class="b" style="left:1832px;top:775px;width:42px;height:30px;background:#f44336;border-radius:0 3px 3px 0;"></div>
<svg class="i" style="left:1803px;top:781px;" width="16" height="16" viewBox="-0.5 0 16 16"><path d="M1.3 13.9 L13.6 1.6" stroke="#fff" stroke-width="3.3"/><path d="M10.1 2.8 L12.5 5.2" stroke="#1e73be" stroke-width="0.8"/><g fill="#fff"><path d="M2.3 -0.4l.55 1.05 1.05.55-1.05.55-.55 1.05-.55-1.05-1.05-.55 1.05-.55z"/><path d="M7.6 -0.3l.5 .95 .95.5-.95.5-.5.95-.5-.95-.95-.5.95-.5z"/><path d="M4.9 2.3l.55 1.05 1.05.55-1.05.55-.55 1.05-.55-1.05-1.05-.55 1.05-.55z"/><path d="M13.9 5.8l.5.95.95.5-.95.5-.5.95-.5-.95-.95-.5.95-.5z"/></g></svg>
<svg class="i" style="left:1846px;top:781px;" width="14" height="16" viewBox="-0.5 -0.7 14 16"><g fill="none" stroke="#fff"><path d="M4.4 3.2 V1.5 Q4.4 0.65 5.2 0.65 H8 Q8.8 0.65 8.8 1.5 V3.2" stroke-width="1.3"/><path d="M0.2 3.7 H13" stroke-width="1.7"/></g><path d="M1.5 4 H11.7 V12.7 Q11.7 14.5 9.9 14.5 H3.3 Q1.5 14.5 1.5 12.7Z" fill="#fff"/><g fill="#f44336" fill-opacity=".55"><rect x="3.3" y="5.9" width="0.8" height="6.4"/><rect x="5.3" y="5.9" width="0.8" height="6.4"/><rect x="7.2" y="5.9" width="0.8" height="6.4"/><rect x="9.1" y="5.9" width="0.8" height="6.4"/></g></svg>
<div class="b" style="left:281px;top:818px;width:1613px;height:55px;background:#f0f3f8;border-bottom:1px solid #e1e5ec;"></div>
<span class="t" style="left:301.60px;top:839.35px;font-size:14px;color:#1a1a1a;letter-spacing:-0.779px;">516</span>
<span class="t" style="left:364.00px;top:839.35px;font-size:14px;color:#1a1a1a;letter-spacing:-0.386px;">Бухгалтерия</span>
<span class="t" style="left:899.60px;top:839.35px;font-size:14px;color:#1a1a1a;letter-spacing:0.011px;">buhgalteriya</span>
<svg class="i" style="left:1356px;top:837px;" width="15" height="14" viewBox="-0.6642 -0.2044 15.328 14.307"><circle cx="7" cy="7" r="7" fill="#e53935"/><path d="M4.2 4.2 L9.8 9.8 M9.8 4.2 L4.2 9.8" fill="none" stroke="#fff" stroke-width="2.2" stroke-linecap="butt"/></svg>
<svg class="i" style="left:1467px;top:837px;" width="14" height="14" viewBox="-0.1533 -0.2044 14.307 14.307"><circle cx="7" cy="7" r="7" fill="#e53935"/><path d="M4.2 4.2 L9.8 9.8 M9.8 4.2 L4.2 9.8" fill="none" stroke="#fff" stroke-width="2.2" stroke-linecap="butt"/></svg>
<svg class="i" style="left:1577px;top:837px;" width="15" height="14" viewBox="-0.6642 -0.2044 15.328 14.307"><circle cx="7" cy="7" r="7" fill="#e53935"/><path d="M4.2 4.2 L9.8 9.8 M9.8 4.2 L4.2 9.8" fill="none" stroke="#fff" stroke-width="2.2" stroke-linecap="butt"/></svg>
<svg class="i" style="left:1688px;top:837px;" width="14" height="14" viewBox="-0.1533 -0.2044 14.307 14.307"><circle cx="7" cy="7" r="7" fill="#e53935"/><path d="M4.2 4.2 L9.8 9.8 M9.8 4.2 L4.2 9.8" fill="none" stroke="#fff" stroke-width="2.2" stroke-linecap="butt"/></svg>
<div class="b" style="left:1790px;top:830px;width:42px;height:30px;background:#1e73be;border-radius:3px 0 0 3px;"></div>
<div class="b" style="left:1832px;top:830px;width:42px;height:30px;background:#f44336;border-radius:0 3px 3px 0;"></div>
<svg class="i" style="left:1803px;top:836px;" width="16" height="16" viewBox="-0.5 0 16 16"><path d="M1.3 13.9 L13.6 1.6" stroke="#fff" stroke-width="3.3"/><path d="M10.1 2.8 L12.5 5.2" stroke="#1e73be" stroke-width="0.8"/><g fill="#fff"><path d="M2.3 -0.4l.55 1.05 1.05.55-1.05.55-.55 1.05-.55-1.05-1.05-.55 1.05-.55z"/><path d="M7.6 -0.3l.5 .95 .95.5-.95.5-.5.95-.5-.95-.95-.5.95-.5z"/><path d="M4.9 2.3l.55 1.05 1.05.55-1.05.55-.55 1.05-.55-1.05-1.05-.55 1.05-.55z"/><path d="M13.9 5.8l.5.95.95.5-.95.5-.5.95-.5-.95-.95-.5.95-.5z"/></g></svg>
<svg class="i" style="left:1846px;top:836px;" width="14" height="16" viewBox="-0.5 -0.7 14 16"><g fill="none" stroke="#fff"><path d="M4.4 3.2 V1.5 Q4.4 0.65 5.2 0.65 H8 Q8.8 0.65 8.8 1.5 V3.2" stroke-width="1.3"/><path d="M0.2 3.7 H13" stroke-width="1.7"/></g><path d="M1.5 4 H11.7 V12.7 Q11.7 14.5 9.9 14.5 H3.3 Q1.5 14.5 1.5 12.7Z" fill="#fff"/><g fill="#f44336" fill-opacity=".55"><rect x="3.3" y="5.9" width="0.8" height="6.4"/><rect x="5.3" y="5.9" width="0.8" height="6.4"/><rect x="7.2" y="5.9" width="0.8" height="6.4"/><rect x="9.1" y="5.9" width="0.8" height="6.4"/></g></svg>
<div class="b" style="left:281px;top:873px;width:1613px;height:55px;background:#ffffff;border-bottom:1px solid #e1e5ec;"></div>
<span class="t" style="left:301.60px;top:894.35px;font-size:14px;color:#1a1a1a;letter-spacing:-0.779px;">517</span>
<span class="t" style="left:364.00px;top:894.35px;font-size:14px;color:#1a1a1a;letter-spacing:-0.269px;">Гаджеты</span>
<span class="t" style="left:899.60px;top:894.35px;font-size:14px;color:#1a1a1a;letter-spacing:-0.060px;">gadzhety</span>
<svg class="i" style="left:1356px;top:892px;" width="15" height="14" viewBox="-0.6642 -0.2044 15.328 14.307"><circle cx="7" cy="7" r="7" fill="#e53935"/><path d="M4.2 4.2 L9.8 9.8 M9.8 4.2 L4.2 9.8" fill="none" stroke="#fff" stroke-width="2.2" stroke-linecap="butt"/></svg>
<svg class="i" style="left:1467px;top:892px;" width="14" height="14" viewBox="-0.1533 -0.2044 14.307 14.307"><circle cx="7" cy="7" r="7" fill="#e53935"/><path d="M4.2 4.2 L9.8 9.8 M9.8 4.2 L4.2 9.8" fill="none" stroke="#fff" stroke-width="2.2" stroke-linecap="butt"/></svg>
<svg class="i" style="left:1577px;top:892px;" width="15" height="14" viewBox="-0.6642 -0.2044 15.328 14.307"><circle cx="7" cy="7" r="7" fill="#e53935"/><path d="M4.2 4.2 L9.8 9.8 M9.8 4.2 L4.2 9.8" fill="none" stroke="#fff" stroke-width="2.2" stroke-linecap="butt"/></svg>
<svg class="i" style="left:1688px;top:892px;" width="14" height="14" viewBox="-0.1533 -0.2044 14.307 14.307"><circle cx="7" cy="7" r="7" fill="#e53935"/><path d="M4.2 4.2 L9.8 9.8 M9.8 4.2 L4.2 9.8" fill="none" stroke="#fff" stroke-width="2.2" stroke-linecap="butt"/></svg>
<div class="b" style="left:1790px;top:885px;width:42px;height:30px;background:#1e73be;border-radius:3px 0 0 3px;"></div>
<div class="b" style="left:1832px;top:885px;width:42px;height:30px;background:#f44336;border-radius:0 3px 3px 0;"></div>
<svg class="i" style="left:1803px;top:891px;" width="16" height="16" viewBox="-0.5 0 16 16"><path d="M1.3 13.9 L13.6 1.6" stroke="#fff" stroke-width="3.3"/><path d="M10.1 2.8 L12.5 5.2" stroke="#1e73be" stroke-width="0.8"/><g fill="#fff"><path d="M2.3 -0.4l.55 1.05 1.05.55-1.05.55-.55 1.05-.55-1.05-1.05-.55 1.05-.55z"/><path d="M7.6 -0.3l.5 .95 .95.5-.95.5-.5.95-.5-.95-.95-.5.95-.5z"/><path d="M4.9 2.3l.55 1.05 1.05.55-1.05.55-.55 1.05-.55-1.05-1.05-.55 1.05-.55z"/><path d="M13.9 5.8l.5.95.95.5-.95.5-.5.95-.5-.95-.95-.5.95-.5z"/></g></svg>
<svg class="i" style="left:1846px;top:891px;" width="14" height="16" viewBox="-0.5 -0.7 14 16"><g fill="none" stroke="#fff"><path d="M4.4 3.2 V1.5 Q4.4 0.65 5.2 0.65 H8 Q8.8 0.65 8.8 1.5 V3.2" stroke-width="1.3"/><path d="M0.2 3.7 H13" stroke-width="1.7"/></g><path d="M1.5 4 H11.7 V12.7 Q11.7 14.5 9.9 14.5 H3.3 Q1.5 14.5 1.5 12.7Z" fill="#fff"/><g fill="#f44336" fill-opacity=".55"><rect x="3.3" y="5.9" width="0.8" height="6.4"/><rect x="5.3" y="5.9" width="0.8" height="6.4"/><rect x="7.2" y="5.9" width="0.8" height="6.4"/><rect x="9.1" y="5.9" width="0.8" height="6.4"/></g></svg>
<div class="b" style="left:281px;top:928px;width:1613px;height:55px;background:#f0f3f8;border-bottom:1px solid #e1e5ec;"></div>
<span class="t" style="left:301.60px;top:949.35px;font-size:14px;color:#1a1a1a;letter-spacing:-0.779px;">518</span>
<span class="t" style="left:364.00px;top:949.35px;font-size:14px;color:#1a1a1a;letter-spacing:0.493px;">Биткоин</span>
<span class="t" style="left:899.60px;top:949.35px;font-size:14px;color:#1a1a1a;letter-spacing:0.322px;">bitkoin</span>
<svg class="i" style="left:1356px;top:947px;" width="15" height="14" viewBox="-0.6642 -0.2044 15.328 14.307"><circle cx="7" cy="7" r="7" fill="#e53935"/><path d="M4.2 4.2 L9.8 9.8 M9.8 4.2 L4.2 9.8" fill="none" stroke="#fff" stroke-width="2.2" stroke-linecap="butt"/></svg>
<svg class="i" style="left:1467px;top:947px;" width="14" height="14" viewBox="-0.1533 -0.2044 14.307 14.307"><circle cx="7" cy="7" r="7" fill="#e53935"/><path d="M4.2 4.2 L9.8 9.8 M9.8 4.2 L4.2 9.8" fill="none" stroke="#fff" stroke-width="2.2" stroke-linecap="butt"/></svg>
<svg class="i" style="left:1577px;top:947px;" width="15" height="14" viewBox="-0.6642 -0.2044 15.328 14.307"><circle cx="7" cy="7" r="7" fill="#e53935"/><path d="M4.2 4.2 L9.8 9.8 M9.8 4.2 L4.2 9.8" fill="none" stroke="#fff" stroke-width="2.2" stroke-linecap="butt"/></svg>
<svg class="i" style="left:1688px;top:947px;" width="14" height="14" viewBox="-0.1533 -0.2044 14.307 14.307"><circle cx="7" cy="7" r="7" fill="#e53935"/><path d="M4.2 4.2 L9.8 9.8 M9.8 4.2 L4.2 9.8" fill="none" stroke="#fff" stroke-width="2.2" stroke-linecap="butt"/></svg>
<div class="b" style="left:1790px;top:940px;width:42px;height:30px;background:#1e73be;border-radius:3px 0 0 3px;"></div>
<div class="b" style="left:1832px;top:940px;width:42px;height:30px;background:#f44336;border-radius:0 3px 3px 0;"></div>
<svg class="i" style="left:1803px;top:946px;" width="16" height="16" viewBox="-0.5 0 16 16"><path d="M1.3 13.9 L13.6 1.6" stroke="#fff" stroke-width="3.3"/><path d="M10.1 2.8 L12.5 5.2" stroke="#1e73be" stroke-width="0.8"/><g fill="#fff"><path d="M2.3 -0.4l.55 1.05 1.05.55-1.05.55-.55 1.05-.55-1.05-1.05-.55 1.05-.55z"/><path d="M7.6 -0.3l.5 .95 .95.5-.95.5-.5.95-.5-.95-.95-.5.95-.5z"/><path d="M4.9 2.3l.55 1.05 1.05.55-1.05.55-.55 1.05-.55-1.05-1.05-.55 1.05-.55z"/><path d="M13.9 5.8l.5.95.95.5-.95.5-.5.95-.5-.95-.95-.5.95-.5z"/></g></svg>
<svg class="i" style="left:1846px;top:946px;" width="14" height="16" viewBox="-0.5 -0.7 14 16"><g fill="none" stroke="#fff"><path d="M4.4 3.2 V1.5 Q4.4 0.65 5.2 0.65 H8 Q8.8 0.65 8.8 1.5 V3.2" stroke-width="1.3"/><path d="M0.2 3.7 H13" stroke-width="1.7"/></g><path d="M1.5 4 H11.7 V12.7 Q11.7 14.5 9.9 14.5 H3.3 Q1.5 14.5 1.5 12.7Z" fill="#fff"/><g fill="#f44336" fill-opacity=".55"><rect x="3.3" y="5.9" width="0.8" height="6.4"/><rect x="5.3" y="5.9" width="0.8" height="6.4"/><rect x="7.2" y="5.9" width="0.8" height="6.4"/><rect x="9.1" y="5.9" width="0.8" height="6.4"/></g></svg>
<div class="b" style="left:260px;top:50px;width:1660px;height:131px;background:#fff;box-shadow:0 1px 9px rgba(0,0,0,.22);"></div>
<div class="b" style="left:260px;top:139px;width:1660px;height:42px;background:#fafbfd;border-top:1px solid #e2e5ea;"></div>
<span class="t" style="left:306.00px;top:86.66px;font-size:16px;color:#0a0a0a;letter-spacing:0.331px;-webkit-text-stroke:0.55px #0a0a0a;">Менеджер категорий</span>
<span class="t" style="left:1561.80px;top:106.25px;font-size:12.7px;color:#333;letter-spacing:-0.296px;-webkit-text-stroke:0.35px #333;">ДОБАВИТЬ НОВОСТЬ</span>
<span class="t" style="left:1718.00px;top:106.25px;font-size:12.7px;color:#333;letter-spacing:-0.241px;-webkit-text-stroke:0.35px #333;">РЕДАКТИРОВАТЬ НОВОСТИ</span>
<span class="t" style="left:303.00px;top:154.57px;font-size:13.5px;color:#333;letter-spacing:-0.314px;">Главная</span>
<span class="t" style="left:358.30px;top:154.57px;font-size:13.5px;color:#aaa;letter-spacing:0.000px;">/</span>
<span class="t" style="left:372.70px;top:154.57px;font-size:13.5px;color:#999;letter-spacing:0.230px;">Управление категориями</span>
<span class="t" style="left:1800.70px;top:154.57px;font-size:13.5px;color:#333;letter-spacing:0.213px;">Настройки</span>
<div class="b" style="left:0px;top:50px;width:260px;height:903px;background:#fff;box-shadow:0 0 9px rgba(0,0,0,.13);"></div>
<svg class="i" style="left:0px;top:50px;" width="260" height="131" viewBox="0 0 260 131"><defs>
<linearGradient id="gd" gradientUnits="userSpaceOnUse" x1="140" y1="61" x2="153" y2="74"><stop offset="0" stop-color="#123f78" stop-opacity=".62"/><stop offset="1" stop-color="#123f78" stop-opacity="0"/></linearGradient>
<linearGradient id="gm" gradientUnits="userSpaceOnUse" x1="100" y1="65" x2="105.5" y2="68.2"><stop offset="0" stop-color="#0f4f86" stop-opacity=".35"/><stop offset="1" stop-color="#0f4f86" stop-opacity="0"/></linearGradient>
<linearGradient id="gy" gradientUnits="userSpaceOnUse" x1="40" y1="40" x2="47.5" y2="41.4"><stop offset="0" stop-color="#df9510"/><stop offset="1" stop-color="#feb20e"/></linearGradient>
<linearGradient id="go" gradientUnits="userSpaceOnUse" x1="20" y1="100" x2="75" y2="100"><stop offset="0" stop-color="#d9501a"/><stop offset=".45" stop-color="#ee5c1b"/><stop offset="1" stop-color="#e45517"/></linearGradient>
<clipPath id="uc"><rect width="260" height="131"/></clipPath></defs>
<g clip-path="url(#uc)">
<rect width="260" height="131" fill="#2083c5"/>
<polygon points="200.5,0 260,0 260,131 69.5,131" fill="#1b61a9"/>
<polygon points="200.5,0 260,0 260,131 69.5,131" fill="url(#gd)"/>
<polygon points="137.4,0 200.5,0 69.5,131 61.8,131" fill="url(#gm)"/>
<polygon points="46.3,0 137.4,0 61.8,131 22,131" fill="url(#gy)"/>
<polygon points="33.6,49.8 82.3,131 12.5,131" fill="url(#go)"/>
<rect y="90" width="260" height="41" fill="#000" opacity=".11"/>
</g></svg>
<svg class="i" style="left:19px;top:69px;" width="51" height="51" viewBox="-0.9 -0.9 51 51"><defs><clipPath id="ac"><circle cx="25" cy="25" r="25"/></clipPath>
<linearGradient id="hair" x1="0" y1="0" x2="1" y2="0.25"><stop offset="0" stop-color="#262626"/><stop offset=".55" stop-color="#4a4a4a"/><stop offset="1" stop-color="#a8a8a8"/></linearGradient>
<linearGradient id="face" x1="0" y1="0" x2="1" y2="0"><stop offset="0" stop-color="#b9b9b9"/><stop offset=".45" stop-color="#dcdcdc"/><stop offset="1" stop-color="#ececec"/></linearGradient>
<linearGradient id="sh" x1="0" y1="0" x2="0" y2="1"><stop offset="0" stop-color="#ececec"/><stop offset="1" stop-color="#c4c4c4"/></linearGradient></defs>
<circle cx="25" cy="25" r="25" fill="#fff"/>
<g clip-path="url(#ac)">
<path d="M8 50 L8.5 40 Q9 33 14 31 L21.5 27.2 Q24 25.2 27 25.6 L31 27.2 L37 29 Q41 31 41.2 38 L41.6 50 Z" fill="url(#sh)"/>
<path d="M8.3 37 Q11 30.4 15.5 31.6 Q19.5 40 19.5 50 L8 50 Z" fill="#c9c9c9"/>
<path d="M15.5 31.6 Q19.5 40 19.5 50 L21 50 Q20.6 38 16.6 31.2Z" fill="#b4b4b4"/>
<path d="M22.5 18 L22.6 26.4 L29.4 28.8 L31 23.6 Z" fill="#bdbdbd"/>
<path d="M22.5 12 Q24 7.5 30 7.5 L37 7.6 L37.1 13 L36.3 17 L36.9 20 L35.6 23.4 Q34 25.2 32 24.7 L27 23 Q23.5 20.5 22.8 17 Z" fill="url(#face)"/>
<path d="M18.6 15 Q17.4 6 24 3 Q30 0.8 36 4.8 Q37.6 6 37.2 7.8 Q33 6.8 30 8 Q26.4 9.8 24.8 14 L23.8 18.6 Q22 19.6 20.4 18.4 Z" fill="url(#hair)"/>
<ellipse cx="22.4" cy="17.2" rx="1.2" ry="2" fill="#cfcfcf"/>
<path d="M30 15.4 Q31.5 14.8 33 15.6 L32.8 16.6 Q31.4 16.2 30.2 16.6Z" fill="#9a9a9a"/>
<path d="M21.4 27.2 Q24 25 27 25.6 L29.6 27.4 L27.6 29.4 Z" fill="#f4f4f4"/>
<path d="M27.6 27.8 L29.7 27 L33.3 42.4 L31.5 44.8 L30 43.2 Z" fill="#1c1c1c"/>
</g></svg>
<span class="t" style="left:75.00px;top:76.34px;font-size:12px;color:#fff;letter-spacing:0.079px;text-shadow:0 1px 1px rgba(0,0,0,.35);">admin</span>
<span class="t" style="left:75.00px;top:93.50px;font-size:13px;color:#fff;letter-spacing:-0.141px;text-shadow:0 1px 1px rgba(0,0,0,.35);">Администраторы</span>
<span class="t" style="left:20.00px;top:154.35px;font-size:14px;color:#fff;letter-spacing:-0.011px;text-shadow:0 1px 1px rgba(0,0,0,.35);">Аккаунт</span>
<svg class="i" style="left:227px;top:158px;" width="10" height="6" viewBox="-0.4 0 10 6"><path d="M0.8 0.8 L4.7 4.6 L8.6 0.8" fill="none" stroke="#fff" stroke-width="1.5" stroke-linecap="round" stroke-linejoin="round"/></svg>
<span class="t" style="left:20.00px;top:207.89px;font-size:11px;color:#999;letter-spacing:-0.417px;">СПИСОК РАЗДЕЛОВ</span>
<span class="t" style="left:51.40px;top:250.15px;font-size:14px;color:#333;letter-spacing:-0.033px;-webkit-text-stroke:0.4px #333;">Все разделы панели</span>
<span class="t" style="left:51.40px;top:296.15px;font-size:14px;color:#333;letter-spacing:0.263px;-webkit-text-stroke:0.4px #333;">Настройки скрипта</span>
<svg class="i" style="left:234px;top:299px;" width="7" height="9" viewBox="-0.4 0 7 9"><path d="M0.9 0.8 L4.7 4.3 L0.9 7.8" fill="none" stroke="#444" stroke-width="1.3" stroke-linecap="round" stroke-linejoin="round"/></svg>
<span class="t" style="left:51.50px;top:342.15px;font-size:14px;color:#333;letter-spacing:0.093px;-webkit-text-stroke:0.4px #333;">Пользователи</span>
<svg class="i" style="left:234px;top:345px;" width="7" height="9" viewBox="-0.4 0 7 9"><path d="M0.9 0.8 L4.7 4.3 L0.9 7.8" fill="none" stroke="#444" stroke-width="1.3" stroke-linecap="round" stroke-linejoin="round"/></svg>
<span class="t" style="left:52.70px;top:388.15px;font-size:14px;color:#333;letter-spacing:0.132px;-webkit-text-stroke:0.4px #333;">Управление шаблонами</span>
<svg class="i" style="left:234px;top:391px;" width="7" height="9" viewBox="-0.4 0 7 9"><path d="M0.9 0.8 L4.7 4.3 L0.9 7.8" fill="none" stroke="#444" stroke-width="1.3" stroke-linecap="round" stroke-linejoin="round"/></svg>
<span class="t" style="left:51.30px;top:434.15px;font-size:14px;color:#333;letter-spacing:-0.098px;-webkit-text-stroke:0.4px #333;">Утилиты</span>
<svg class="i" style="left:234px;top:437px;" width="7" height="9" viewBox="-0.4 0 7 9"><path d="M0.9 0.8 L4.7 4.3 L0.9 7.8" fill="none" stroke="#444" stroke-width="1.3" stroke-linecap="round" stroke-linejoin="round"/></svg>
<span class="t" style="left:51.30px;top:480.15px;font-size:14px;color:#333;letter-spacing:0.188px;-webkit-text-stroke:0.4px #333;">Другие разделы</span>
<svg class="i" style="left:234px;top:483px;" width="7" height="9" viewBox="-0.4 0 7 9"><path d="M0.9 0.8 L4.7 4.3 L0.9 7.8" fill="none" stroke="#444" stroke-width="1.3" stroke-linecap="round" stroke-linejoin="round"/></svg>
<span class="t" style="left:51.30px;top:526.15px;font-size:14px;color:#333;letter-spacing:0.118px;-webkit-text-stroke:0.4px #333;">Сторонние модули</span>
<svg class="i" style="left:234px;top:529px;" width="7" height="9" viewBox="-0.4 0 7 9"><path d="M0.9 0.8 L4.7 4.3 L0.9 7.8" fill="none" stroke="#444" stroke-width="1.3" stroke-linecap="round" stroke-linejoin="round"/></svg>
<div class="b" style="left:0px;top:0px;width:1920px;height:50px;background:#3f6ea1;box-shadow:0 1px 14px rgba(0,0,0,.23);"></div>
<span class="t" style="left:21.50px;top:16.18px;font-size:22px;color:#fff;letter-spacing:2.139px;-webkit-text-stroke:0.65px #fff;text-shadow:0 2px 3px rgba(0,0,0,.35);">DataLife Engine</span>
<svg class="i" style="left:276px;top:20px;" width="15" height="13" viewBox="0 0 15 13"><path d="M0 1.2H15M0 6.5H15M0 11.8H15" stroke="#fff" stroke-width="2.4"/></svg>
<svg class="i" style="left:1777px;top:18px;" width="16" height="16" viewBox="-0.863 -0.863 15.342 15.342"><circle cx="7" cy="7" r="7" fill="#fff"/><path d="M2.6 4 Q3.2 2.4 4.6 1.9 Q6.4 1.1 8.2 1.4 L7.6 2.6 L8.6 3.2 L10.6 3.6 Q10.6 5 9.4 5.8 L8.4 6.6 Q7.4 7.2 7.2 8.2 Q7.2 9.4 7.9 10.4 L8 11 Q6.8 10.6 6.2 10 Q4.6 8.8 3.4 7 Q2.5 5.4 2.6 4Z" fill="#3f6ea1"/><ellipse cx="9.5" cy="11.6" rx="1.0" ry="0.75" transform="rotate(-25 9.5 11.6)" fill="#3f6ea1"/></svg>
<svg class="i" style="left:1823px;top:18px;" width="16" height="16" viewBox="-0.7 -0.9 16 16"><g fill="#fff"><path d="M14.8 0 V5.9 L8.9 0Z"/><path d="M0 14.6 V8.7 L5.9 14.6Z"/></g><path d="M3 11.6 L6.5 8.2 M8.3 6.4 L11.8 3" stroke="#fff" stroke-width="2.5"/></svg>
<svg class="i" style="left:1868px;top:20px;" width="18" height="14" viewBox="-0.9 0 18 14"><rect width="16.4" height="13.3" rx="1.4" fill="#fff"/><path d="M0 3.5 L8.2 9.5 L16.4 3.5" fill="none" stroke="#3f6ea1" stroke-width="1"/></svg>
<svg class="i" style="left:1732px;top:17px;" width="15" height="18" viewBox="0 -0.6 15 18"><path d="M2 0.2 L7 2.6 V4 L2 3.4Z" fill="#fff"/><path d="M8.6 2.4 L12.6 0.4 V3.2 L8.6 3.6Z" fill="none" stroke="#fff" stroke-width="0.9"/><rect x="0.5" y="4.2" width="6.6" height="9.6" fill="#fff" fill-opacity=".22" stroke="#fff" stroke-width="0.9"/><path d="M2 7 H5.6 M3.8 5.6 V7 M5.2 7 Q4.6 10 2 11.4 M2.6 8.2 Q3.6 10.4 5.6 11.2" fill="none" stroke="#fff" stroke-width="0.8"/><rect x="7.1" y="3.4" width="7.2" height="10" fill="#fff"/><path d="M9 11.2 L10.7 5.6 L12.4 11.2 M9.6 9.4 H11.8" fill="none" stroke="#3f6ea1" stroke-width="0.9"/><path d="M3.2 15 Q7 17.4 10.8 15" fill="none" stroke="#fff" stroke-width="1"/></svg>
<svg class="i" style="left:280px;top:88px;" width="18" height="13" viewBox="0 0 18 13"><g fill="none" stroke="#111" stroke-width="1.25" stroke-linejoin="round" stroke-linecap="round"><path d="M0.65 10.8 V2.2 Q0.65 0.65 2.2 0.65 H5 Q6.4 0.65 6.4 2 V3.2 H12 Q13.4 3.2 13.4 4.6 V6.1"/><path d="M0.9 12 L4.6 6.9 Q5.1 6.2 6 6.2 H15.8 Q16.8 6.2 16.2 7.1 L13.2 11.7 Q12.8 12.35 12 12.35 H1.8 Q0.65 12.35 0.65 11.2"/></g></svg>
<svg class="i" style="left:1620px;top:74px;" width="14" height="16" viewBox="0 0 14 16"><path d="M1.60 0.60 H9.00 L13.40 5.00 V14.40 Q13.40 15.40 12.40 15.40 H1.60 Q0.60 15.40 0.60 14.40 V1.60 Q0.60 0.60 1.60 0.60 Z" fill="none" stroke="#4a90d9" stroke-width="1.2" stroke-linejoin="round"/><path d="M9.00 0.60 V5.20 H13.40" fill="none" stroke="#4a90d9" stroke-width="1.2" stroke-linejoin="round"/><rect x="3.2" y="7.05" width="7.2" height="1.1" fill="#4a90d9"/><rect x="3.2" y="9.55" width="7.2" height="1.1" fill="#4a90d9"/><rect x="3.2" y="12.05" width="7.2" height="1.1" fill="#4a90d9"/></svg>
<svg class="i" style="left:1794px;top:74px;" width="18" height="15" viewBox="-0.3 -0.6 18 15"><path d="M11 1.15 H3 Q0.7 1.15 0.7 3.4 V11 Q0.7 13.3 3 13.3 H10.3 Q12.6 13.3 12.6 11 V8.8" fill="none" stroke="#4a90d9" stroke-width="1.4" stroke-linecap="round"/><path d="M5.8 11.2 L5.9 8.6 L13.4 1.1 Q14.2 0.4 15 1.1 L15.9 2 Q16.6 2.8 15.9 3.6 L8.4 11.1 Z" fill="#4a90d9"/><path d="M6.6 9.4 L7.6 10.4" stroke="#fff" stroke-width="0.7"/><path d="M12.4 2.4 L14.6 4.6" stroke="#fff" stroke-width="0.6"/></svg>
<svg class="i" style="left:280px;top:155px;" width="14" height="11" viewBox="-0.8 -0.9 14 11"><path d="M0.3 5 L6.1 0.4 L11.9 5" fill="none" stroke="#333" stroke-width="1.3"/><path d="M1.5 5.2 L6.1 1.6 L10.7 5.2 V10 H7.2 V7 H5 V10 H1.5Z" fill="#333"/><rect x="9" y="0.2" width="1.8" height="3.4" fill="#333"/></svg>
<svg class="i" style="left:1778px;top:154px;" width="14" height="14" viewBox="-0.8 -0.9 14 14"><path d="M4.96 1.91 L5.01 0.06 L7.29 0.06 L7.34 1.91 L8.31 2.32 L9.65 1.04 L11.26 2.65 L9.98 3.99 L10.39 4.96 L12.24 5.01 L12.24 7.29 L10.39 7.34 L9.98 8.31 L11.26 9.65 L9.65 11.26 L8.31 9.98 L7.34 10.39 L7.29 12.24 L5.01 12.24 L4.96 10.39 L3.99 9.98 L2.65 11.26 L1.04 9.65 L2.32 8.31 L1.91 7.34 L0.06 7.29 L0.06 5.01 L1.91 4.96 L2.32 3.99 L1.04 2.65 L2.65 1.04 L3.99 2.32Z M4.25 6.15 a1.90 1.90 0 1 0 3.80 0 a1.90 1.90 0 1 0 -3.80 0Z" fill="#222" fill-rule="evenodd"/></svg>
<svg class="i" style="left:1873px;top:161px;" width="9" height="5" viewBox="0 0 9 5"><path d="M0.7 0.7 L4.3 4.1 L7.9 0.7" fill="none" stroke="#333" stroke-width="1.3" stroke-linecap="round" stroke-linejoin="round"/></svg>
<svg class="i" style="left:297px;top:226px;" width="16" height="13" viewBox="0 -0.1 16 13"><rect x="0" y="0" width="16" height="12.8" rx="1.3" fill="#3a8ed4"/><rect x="1.1" y="3.9" width="13.8" height="7.8" rx="0.4" fill="#fff"/><g fill="#3a8ed4"><rect x="2.2" y="4.9" width="1.7" height="1.1"/><rect x="2.2" y="7.3" width="1.7" height="1.1"/><rect x="2.2" y="9.7" width="1.7" height="1.1"/><rect x="5" y="4.9" width="8.8" height="1.1"/><rect x="5" y="7.3" width="8.8" height="1.1"/><rect x="5" y="9.7" width="8.8" height="1.1"/></g></svg>
<svg class="i" style="left:417px;top:225px;" width="14" height="16" viewBox="0 0 14 16.41"><path d="M1.55 0.55 H9.00 L13.45 5.00 V14.45 Q13.45 15.45 12.45 15.45 H1.55 Q0.55 15.45 0.55 14.45 V1.55 Q0.55 0.55 1.55 0.55 Z" fill="none" stroke="#3a8ed4" stroke-width="1.1" stroke-linejoin="round"/><path d="M9.00 0.55 V5.20 H13.45" fill="none" stroke="#3a8ed4" stroke-width="1.1" stroke-linejoin="round"/><rect x="3.2" y="7.05" width="7.2" height="1.1" fill="#3a8ed4"/><rect x="3.2" y="9.55" width="7.2" height="1.1" fill="#3a8ed4"/><rect x="3.2" y="12.05" width="7.2" height="1.1" fill="#3a8ed4"/></svg>
<svg class="i" style="left:600px;top:225px;" width="15" height="16" viewBox="-0.3043 0 15.217 16.101"><path d="M1.55 0.55 H9.00 L13.45 5.00 V14.45 Q13.45 15.45 12.45 15.45 H1.55 Q0.55 15.45 0.55 14.45 V1.55 Q0.55 0.55 1.55 0.55 Z" fill="none" stroke="#3a8ed4" stroke-width="1.1" stroke-linejoin="round"/><path d="M9.00 0.55 V5.20 H13.45" fill="none" stroke="#3a8ed4" stroke-width="1.1" stroke-linejoin="round"/><path d="M5.2 8.2 L3.4 10.3 L5.2 12.4 M8.7 8.2 L10.5 10.3 L8.7 12.4 M7.6 7.6 L6.3 13" fill="none" stroke="#3a8ed4" stroke-width="1" stroke-linecap="round" stroke-linejoin="round"/></svg>
<svg class="i" style="left:715px;top:226px;" width="19" height="14" viewBox="0 -0.2 19 14"><path d="M0.5 0 V13.2 H18.6" fill="none" stroke="#3a8ed4" stroke-width="1.1"/><g fill="#3a8ed4"><rect x="3.7" y="7" width="2.1" height="4.4"/><rect x="7.2" y="2.8" width="2.1" height="8.6"/><rect x="10.8" y="5.1" width="2.1" height="6.3"/><rect x="14.3" y="1.6" width="2.1" height="9.8"/></g></svg>
<svg class="i" style="left:841px;top:226px;" width="15" height="15" viewBox="-0.3 -0.3 15 15"><path d="M5.51 2.10 L5.58 0.08 L8.22 0.08 L8.29 2.10 L9.31 2.52 L10.79 1.14 L12.66 3.01 L11.28 4.49 L11.70 5.51 L13.72 5.58 L13.72 8.22 L11.70 8.29 L11.28 9.31 L12.66 10.79 L10.79 12.66 L9.31 11.28 L8.29 11.70 L8.22 13.72 L5.58 13.72 L5.51 11.70 L4.49 11.28 L3.01 12.66 L1.14 10.79 L2.52 9.31 L2.10 8.29 L0.08 8.22 L0.08 5.58 L2.10 5.51 L2.52 4.49 L1.14 3.01 L3.01 1.14 L4.49 2.52Z M4.60 6.90 a2.30 2.30 0 1 0 4.60 0 a2.30 2.30 0 1 0 -4.60 0Z" fill="#3a8ed4" fill-rule="evenodd"/></svg>
<svg class="i" style="left:962px;top:226px;" width="16" height="15" viewBox="-0.3 0 16 15"><g fill="none" stroke="#3a8ed4" stroke-linecap="butt"><ellipse cx="4.7" cy="4.9" rx="3.4" ry="3.9" stroke-width="2.2" transform="rotate(40 4.7 4.9)"/><path d="M7 7.2 L14.2 14.2" stroke-width="2.3"/><path d="M12.6 11.8 L13.8 10.4 M11.6 7.4 L14.8 10.6" stroke-width="1.6"/></g></svg>
<svg class="i" style="left:1079px;top:224px;" width="17" height="15" viewBox="-0.2 -0.9 17 15"><g fill="#3a8ed4"><rect x="0" y="5.3" width="10.7" height="8.6"/><circle cx="5.5" cy="1.9" r="1.85"/><rect x="4.8" y="3" width="1.4" height="2.6"/><circle cx="13.7" cy="10.1" r="1.9"/><rect x="10.5" y="9.4" width="2.2" height="1.4"/></g><circle cx="5.5" cy="10.9" r="1.9" fill="#f9fafc"/><rect x="4.85" y="12" width="1.3" height="2.2" fill="#f9fafc"/></svg>
<svg class="i" style="left:300px;top:295px;" width="18" height="13" viewBox="-0.7901 0 17.778 12.8"><rect x="0" y="0" width="16" height="12.8" rx="1.3" fill="#3a8ed4"/><rect x="1.1" y="3.9" width="13.8" height="7.8" rx="0.4" fill="#fff"/><g fill="#3a8ed4"><rect x="2.2" y="4.9" width="1.7" height="1.1"/><rect x="2.2" y="7.3" width="1.7" height="1.1"/><rect x="2.2" y="9.7" width="1.7" height="1.1"/><rect x="5" y="4.9" width="8.8" height="1.1"/><rect x="5" y="7.3" width="8.8" height="1.1"/><rect x="5" y="9.7" width="8.8" height="1.1"/></g></svg>
<svg class="i" style="left:21px;top:249px;" width="15" height="14" viewBox="-0.2 0 15 14"><circle cx="7" cy="7" r="7" fill="#333"/><path d="M2.6 4 Q3.2 2.4 4.6 1.9 Q6.4 1.1 8.2 1.4 L7.6 2.6 L8.6 3.2 L10.6 3.6 Q10.6 5 9.4 5.8 L8.4 6.6 Q7.4 7.2 7.2 8.2 Q7.2 9.4 7.9 10.4 L8 11 Q6.8 10.6 6.2 10 Q4.6 8.8 3.4 7 Q2.5 5.4 2.6 4Z" fill="#fff"/><ellipse cx="9.5" cy="11.6" rx="1.0" ry="0.75" transform="rotate(-25 9.5 11.6)" fill="#fff"/></svg>
<svg class="i" style="left:20px;top:295px;" width="16" height="15" viewBox="-0.7 0 16 15"><path d="M2.1 12.9 L8.4 6.6" stroke="#333" stroke-width="3.9" stroke-linecap="round"/><circle cx="10.4" cy="4.4" r="4.35" fill="#333"/><path d="M11.6 3.2 L16 -1.2" stroke="#fff" stroke-width="3.1" stroke-linecap="round"/><circle cx="2.6" cy="12.4" r="0.65" fill="#fff"/></svg>
<svg class="i" style="left:22px;top:341px;" width="12" height="14" viewBox="-0.3 -0.2 12 14"><circle cx="5.75" cy="3.3" r="3.3" fill="#333"/><path d="M0 13 V9.4 Q0 6.9 2.6 6.9 H3.8 Q5.8 8 7.8 6.9 H9 Q11.6 6.9 11.6 9.4 V13 Q11.6 13.8 10.8 13.8 H0.8 Q0 13.8 0 13Z" fill="#333"/></svg>
<svg class="i" style="left:19px;top:388px;" width="19" height="12" viewBox="-0.9 -0.4 19 12"><rect x="2.95" y="0.7" width="11.4" height="7.7" rx="1.1" fill="none" stroke="#333" stroke-width="1.4"/><rect x="0" y="9.6" width="17.4" height="1.8" rx="0.6" fill="#333"/></svg>
<svg class="i" style="left:20px;top:433px;" width="17" height="13" viewBox="0 0 17 13"><path d="M14.7 0.3 Q13.5 2 10 2 Q4 2 2.4 6.5 Q1.8 8.4 2.4 10 Q3.2 11.6 6 11.5 Q10.4 11.5 13.6 9.2 Q16.6 6.4 15.8 2.2 Q15.5 1 14.7 0.3Z" fill="#333"/><path d="M0.8 12.2 Q1.8 9.8 4 8.5" fill="none" stroke="#333" stroke-width="1.4" stroke-linecap="square"/><path d="M3.8 8.8 Q7 6 11.6 5.2" fill="none" stroke="#fff" stroke-width="0.9" stroke-linecap="round"/></svg>
<svg class="i" style="left:20px;top:477px;" width="16" height="17" viewBox="-0.8 -0.8 16 17"><g fill="none" stroke="#222" stroke-width="1.55"><rect x="0.8" y="1.95" width="6.6" height="5.6" rx="1.7" transform="rotate(45 4.1 4.75)"/><rect x="6.95" y="8.1" width="6.6" height="5.6" rx="1.7" transform="rotate(45 10.25 10.9)"/><path d="M6 6.6 L8.4 9"/></g></svg>
<svg class="i" style="left:19px;top:525px;" width="17" height="13" viewBox="-0.7901 0 16.79 13.102"><rect x="0" y="0" width="16" height="12.8" rx="1.3" fill="#333"/><rect x="1.1" y="3.9" width="13.8" height="7.8" rx="0.4" fill="#fff"/><g fill="#333"><rect x="2.2" y="4.9" width="1.7" height="1.1"/><rect x="2.2" y="7.3" width="1.7" height="1.1"/><rect x="2.2" y="9.7" width="1.7" height="1.1"/><rect x="5" y="4.9" width="8.8" height="1.1"/><rect x="5" y="7.3" width="8.8" height="1.1"/><rect x="5" y="9.7" width="8.8" height="1.1"/></g></svg>
<svg class="i" style="left:1820px;top:866px;" width="90" height="70" viewBox="0 0 90 70"><defs><mask id="wm" maskUnits="userSpaceOnUse" x="0" y="0" width="90" height="70"><rect width="90" height="70" fill="#fff"/><text x="32.6" y="52.3" text-anchor="middle" font-family="Liberation Sans, sans-serif" font-weight="700" font-size="42.5" fill="#000">W</text></mask>
<clipPath id="wc"><path d="M32 0 H90 V70 H32 Z"/></clipPath></defs>
<g fill="#1e242c" fill-opacity=".18">
<path mask="url(#wm)" d="M0.2 35 A32.1 32.1 0 1 1 14 61.4 L0.2 67.2 Z"/>
<path fill-rule="evenodd" d="M48.3 3 A32 32 0 0 1 48.3 67 A36.3 36.3 0 0 0 48.3 3 Z" transform="translate(0,0)"/>
</g></svg>
</body></html>
